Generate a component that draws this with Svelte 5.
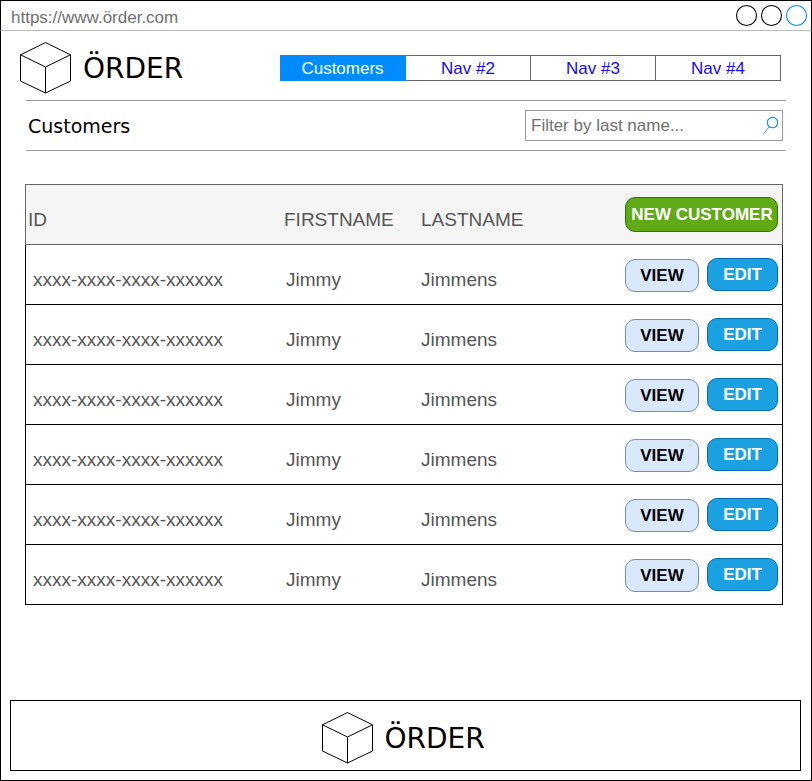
<script>
  const windowControls = ['#000', '#000', '#008cff'];
  const navItems = ['Customers', 'Nav #2', 'Nav #3', 'Nav #4'];
  const customers = Array.from({ length: 6 }, () => ({
    id: 'xxxx-xxxx-xxxx-xxxxxx',
    first: 'Jimmy',
    last: 'Jimmens'
  }));
</script>

{#snippet logo()}
  <div class="logo">
    <svg width="52" height="52" viewBox="0 0 52 52" fill="none" stroke="#000" stroke-width="1">
      <path d="M25.5 .5 50.5 12.8V39L25.5 51 .5 39V12.8Z M.5 12.8 25.5 25 50.5 12.8 M25.5 25V51" />
    </svg>
    <span>ÖRDER</span>
  </div>
{/snippet}

<div class="window">
  <div class="chrome">
    <span class="url">https://www.örder.com</span>
    <div class="controls">
      {#each windowControls as color}
        <svg width="22" height="22" viewBox="0 0 22 22">
          <circle cx="11.5" cy="11.5" r="10" fill="none" stroke={color} stroke-width="1.1" />
        </svg>
      {/each}
    </div>
  </div>

  <header>
    {@render logo()}
    <nav>
      {#each navItems as item, i}
        <a class:active={i === 0} href="#{i}">{item}</a>
      {/each}
    </nav>
  </header>

  <section class="toolbar">
    <h1>Customers</h1>
    <label class="search">
      <input type="text" placeholder="Filter by last name..." />
      <svg width="18" height="22" viewBox="0 0 18 22" fill="none" stroke="#008cff">
        <circle cx="10.5" cy="7.6" r="5.2" stroke-width="1.1" />
        <path d="M7.2 11.7 1.4 19.4" stroke-width="1" opacity=".8" />
      </svg>
    </label>
  </section>

  <main>
    <div class="row head">
      <span class="id">ID</span>
      <span class="first">FIRSTNAME</span>
      <span class="last">LASTNAME</span>
      <div class="actions"><button class="new">NEW CUSTOMER</button></div>
    </div>
    {#each customers as customer}
      <div class="row">
        <span class="id">{customer.id}</span>
        <span class="first">{customer.first}</span>
        <span class="last">{customer.last}</span>
        <div class="actions">
          <button class="view">VIEW</button>
          <button class="edit">EDIT</button>
        </div>
      </div>
    {/each}
  </main>

  <footer>{@render logo()}</footer>
</div>

<style>
  :global(body) { margin: 0; background: #fff; }
  * { box-sizing: border-box; }
  svg { display: block; flex: none; overflow: visible; }
  .window {
    width: 812px;
    height: 781px;
    border: 1px solid #000;
    display: flex;
    flex-direction: column;
    font: 17px/19px "Liberation Sans", Arial, sans-serif;
    background: #fff;
  }
  .chrome {
    height: 30px;
    flex: none;
    margin: 0 -1px;
    border: 1px solid #000;
    border-width: 0 1px;
    border-bottom: 1px solid #bababa;
    display: flex;
    justify-content: space-between;
    padding: 3px 4px 0 10px;
  }
  .url { color: #707070; padding-top: 4px; }
  .controls { display: flex; gap: 3px; }
  header {
    height: 69px;
    flex: none;
    display: flex;
    align-items: flex-start;
    justify-content: space-between;
    padding: 11px 30px 0 19px;
  }
  .logo {
    display: flex;
    gap: 11px;
    font: 28px/33px "DejaVu Sans", Verdana, sans-serif;
    color: #000;
  }
  .logo span { padding-top: 10px; }
  nav { display: flex; margin-top: 13px; }
  nav a {
    width: 125px;
    height: 26px;
    border: 1px solid #666;
    border-left: 0;
    text-align: center;
    color: #1508f0;
    line-height: 25px;
    text-decoration: none;
  }
  nav a.active { width: 126px; background: #008cff; border-color: #008cff; color: #fff; }
  .toolbar {
    width: 760px;
    height: 51px;
    flex: none;
    margin-left: 25px;
    border: solid #999;
    border-width: 1px 0;
    display: flex;
    justify-content: space-between;
    padding: 9px 3px 0 2px;
  }
  h1 { margin: 5px 0 0; font: 19px/23px "DejaVu Sans", Verdana, sans-serif; }
  .search {
    width: 258px;
    height: 31px;
    border: 1px solid #999;
    display: flex;
    align-items: center;
    padding: 0 2px 0 5px;
  }
  input {
    flex: 1;
    min-width: 0;
    height: 29px;
    border: 0;
    padding: 0;
    outline: 0;
    background: none;
    font: inherit;
  }
  input::placeholder { color: #707070; opacity: 1; }
  main { width: 758px; margin: 33px 0 0 24px; flex: none; }
  .row {
    display: grid;
    grid-template-columns: 259px 136px 1fr auto;
    height: 60px;
    border: 1px solid #000;
    border-top: 0;
    padding-right: 4px;
    color: #555;
    font-size: 19px;
    line-height: 21px;
  }
  .head { height: 61px; border: 1px solid #666; background: #f5f5f5; }
  .row > span { padding-top: 24px; }
  .id { padding-left: 7px; }
  .first { padding-left: 1px; }
  .head .id { padding-left: 2px; }
  .head .first { margin-left: -1px; padding-left: 0; }
  .actions { display: flex; align-items: flex-start; gap: 8px; padding-top: 13px; }
  .head .actions { padding-top: 12px; }
  button {
    height: 33px;
    border: 1px solid;
    border-radius: 10px;
    padding: 0;
    font: bold 17px/19px "Liberation Sans", Arial, sans-serif;
    white-space: nowrap;
  }
  .new { width: 153px; height: 35px; background: #60a917; border-color: #2d7600; color: #fff; padding-left: 1px; }
  .view { width: 74px; margin-top: 1px; background: #dae8fc; border-color: #6c8ebf; color: #000; }
  .edit { width: 71px; background: #1ba1e2; border-color: #006eaf; color: #fff; }
  footer {
    height: 71px;
    flex: none;
    margin: auto 10px 9px 9px;
    border: 1px solid #000;
    display: flex;
    padding: 11px 0 0 310.5px;
  }
</style>
